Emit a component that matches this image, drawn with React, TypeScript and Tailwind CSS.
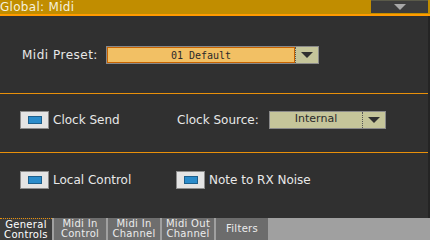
const font = "font-['DejaVu_Sans',sans-serif]";

function Checkbox() {
    return (
        <div className="w-[29px] h-[18px] bg-[#e4e4e4] border border-[#8c8c8c] flex items-center justify-center shrink-0">
            <div className="w-[14px] h-[8px] bg-[#2b8ccb] border border-[#1c5f8c]" />
        </div>
    );
}

function Arrow({ color }: { color: string }) {
    return (
        <svg width="12" height="6" viewBox="0 0 12 6">
            <polygon points="0,0 12,0 6,6" fill={color} />
        </svg>
    );
}

function CheckItem({ label, className }: { label: string; className?: string }) {
    return (
        <div className={`flex items-center gap-[4px] shrink-0 ${className ?? ""}`}>
            <Checkbox />
            <span className="text-[12px] whitespace-nowrap">{label}</span>
        </div>
    );
}

const tabs = [
    ["General", "Controls"],
    ["Midi In", "Control"],
    ["Midi In", "Channel"],
    ["Midi Out", "Channel"],
];

export default function App() {
    return (
        <div className={`w-[430px] h-[240px] bg-[#303030] flex flex-col overflow-hidden text-[#e8e8e8] ${font}`}>
            {/* Title bar */}
            <div className="h-[14px] bg-[#c18d00] flex items-stretch shrink-0">
                <div className="flex-1 text-[12px] leading-[14px] text-[#f4f0dc] tracking-[0.3px]">
                    Global: Midi
                </div>
                <div className="w-[57px] h-[13px] bg-[#3c3c3c] border-t border-[#5a5a4a] flex items-center justify-center mr-[2px]">
                    <Arrow color="#a8a8a8" />
                </div>
            </div>
            <div className="h-[2px] bg-[#ff9a00] shrink-0" />

            <div className="flex-1 flex flex-col border-r-2 border-[#242424]">
                {/* Midi preset */}
                <div className="h-[77px] flex items-center pl-[22px] pt-[1px]">
                    <span className="text-[12px] tracking-[0.5px] w-[84px] shrink-0">Midi Preset:</span>
                    <div className="flex h-[18px] border border-[#8a8a8a]">
                        <div className="w-[188px] bg-[#f2c064] border border-[#c86400] flex items-center justify-center text-[10px] font-['DejaVu_Sans_Mono',monospace] text-[#2a2a2a]">
                            01 Default
                        </div>
                        <div className="w-[23px] bg-[#c5c59a] border-l border-dotted border-[#555] flex items-center justify-center">
                            <Arrow color="#303030" />
                        </div>
                    </div>
                </div>
                <div className="h-px bg-[#e8900a]" />

                {/* Clock */}
                <div className="h-[58px] flex items-center pl-[20px] pb-[7px]">
                    <CheckItem label="Clock Send" className="w-[157px]" />
                    <span className="text-[12px] w-[92px] shrink-0">Clock Source:</span>
                    <div className="flex h-[18px] w-[117px] bg-[#c5c59a] border border-[#8a8a8a]">
                        <div className="flex-1 flex items-center justify-center text-[11px] text-[#2a2a2a]">
                            Internal
                        </div>
                        <div className="w-[23px] border-l border-dotted border-[#555] flex items-center justify-center">
                            <Arrow color="#303030" />
                        </div>
                    </div>
                </div>
                <div className="h-px bg-[#e8900a]" />

                {/* Local control */}
                <div className="flex-1 flex items-center pl-[20px] pb-[12px]">
                    <CheckItem label="Local Control" className="w-[156px]" />
                    <CheckItem label="Note to RX Noise" />
                </div>
            </div>

            {/* Tabs */}
            <div className="h-[22px] flex bg-[#a0a0a0] shrink-0 text-[10px] leading-[10px] text-center tracking-[0.3px]">
                {tabs.map(([a, b], i) => (
                    <div
                        key={a + b}
                        className={`w-[52px] mr-[2px] flex flex-col justify-center ${
                            i === 0
                                ? "bg-[#3c3c3c] text-white border-t border-dotted border-[#e8900a]"
                                : "bg-[#6e6e6e] text-[#ececec]"
                        }`}
                    >
                        <span>{a}</span>
                        <span>{b}</span>
                    </div>
                ))}
                <div className="w-[52px] bg-[#6c6c6c] text-[#ececec] flex items-center justify-center">
                    Filters
                </div>
            </div>
        </div>
    );
}
